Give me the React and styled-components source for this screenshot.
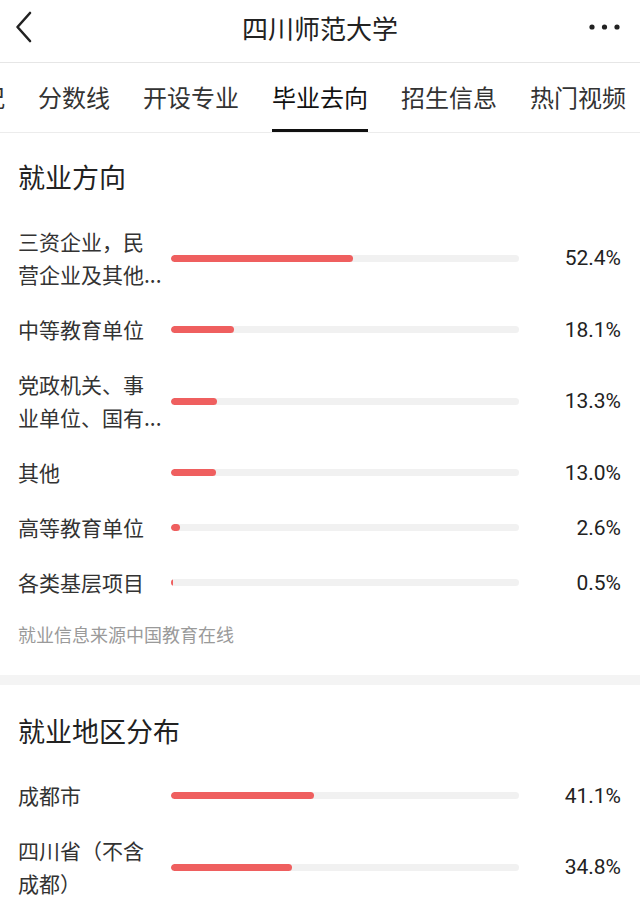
import React from "react"
import styled, { createGlobalStyle } from "styled-components"

const GlobalStyle = createGlobalStyle`
  html, body {
    margin: 0;
    padding: 0;
    background: #fff;
  }
  body {
    font-family: "Noto Sans CJK SC", "Noto Sans", sans-serif;
    color: #333;
    width: 640px;
    overflow: hidden;
  }
`

const Page = styled.div`
  width: 640px;
  background: #fff;
`

const Header = styled.header`
  height: 63px;
  display: flex;
  align-items: center;
  justify-content: space-between;
  padding: 0 20px 8px 12px;
  border-bottom: 1px solid #e6e6e6;
  box-sizing: border-box;
`

const IconButton = styled.div`
  width: ${p => p.$w}px;
  height: 40px;
  display: flex;
  align-items: center;
  justify-content: ${p => (p.$right ? "flex-end" : "flex-start")};
`

const Title = styled.h1`
  margin: 0;
  font-size: 26px;
  font-weight: 400;
  color: #222;
`

const TabBar = styled.nav`
  height: 70px;
  border-bottom: 1px solid #ececec;
  overflow: hidden;
  box-sizing: border-box;
`

const TabStrip = styled.div`
  display: flex;
  gap: 33px;
  height: 100%;
  margin-left: -91px;
  white-space: nowrap;
`

const Tab = styled.div`
  position: relative;
  display: flex;
  align-items: center;
  font-size: 24px;
  color: ${p => (p.$active ? "#111" : "#333")};
  padding-bottom: 3px;

  &::after {
    content: "";
    display: ${p => (p.$active ? "block" : "none")};
    position: absolute;
    left: 0;
    right: 0;
    bottom: 0;
    height: 3px;
    background: #111;
  }
`

const Section = styled.section`
  padding: ${p => p.$top}px 19px ${p => p.$bottom}px 18px;
`

const SectionTitle = styled.h2`
  margin: 0 0 28px;
  font-size: 27px;
  line-height: 40px;
  font-weight: 400;
  color: #222;
`

const List = styled.div`
  display: flex;
  flex-direction: column;
  gap: 22px;
`

const Row = styled.div`
  display: flex;
  align-items: center;
`

const Label = styled.div`
  width: 132px;
  margin-right: 21px;
  font-size: 21px;
  line-height: 33px;
  color: #333;
`

const Line = styled.div`
  white-space: nowrap;
`

const Track = styled.div`
  width: 348px;
  height: 7px;
  border-radius: 4px;
  background: #f1f1f1;
  overflow: hidden;
`

const Fill = styled.div`
  height: 100%;
  border-radius: 4px;
  background: #ef5f5f;
`

const Percent = styled.div`
  flex: 1;
  text-align: right;
  font-family: Roboto, "Liberation Sans", sans-serif;
  font-size: 21px;
  color: #222;
`

const Note = styled.p`
  margin: 23px 0 0;
  font-size: 18px;
  line-height: 24px;
  color: #9a9a9a;
`

const Divider = styled.div`
  height: 10px;
  background: #f4f4f4;
`

const tabs = ["院校概况", "分数线", "开设专业", "毕业去向", "招生信息", "热门视频", "校园风光"]

const jobs = [
  { lines: ["三资企业，民", "营企业及其他..."], value: 52.4 },
  { lines: ["中等教育单位"], value: 18.1 },
  { lines: ["党政机关、事", "业单位、国有..."], value: 13.3 },
  { lines: ["其他"], value: 13.0 },
  { lines: ["高等教育单位"], value: 2.6 },
  { lines: ["各类基层项目"], value: 0.5 },
]

const regions = [
  { lines: ["成都市"], value: 41.1 },
  { lines: ["四川省（不含", "成都）"], value: 34.8 },
]

const BarRow = ({ lines, value }) => (
  <Row>
    <Label>
      {lines.map(l => (
        <Line key={l}>{l}</Line>
      ))}
    </Label>
    <Track>
      <Fill style={{ width: `${Math.max(value, 0.4)}%` }} />
    </Track>
    <Percent>{value.toFixed(1)}%</Percent>
  </Row>
)

const App = () => {
  return (
    <Page>
      <GlobalStyle />
      <Header>
        <IconButton $w={48}>
          <svg width="22" height="32" viewBox="0 0 22 32">
            <path d="M18 2 L5.5 16 L18 30" fill="none" stroke="#222" strokeWidth="2.6" strokeLinecap="round" strokeLinejoin="round" />
          </svg>
        </IconButton>
        <Title>四川师范大学</Title>
        <IconButton $w={40} $right>
          <svg width="31" height="8" viewBox="0 0 31 8">
            <circle cx="3" cy="4" r="2.6" fill="#222" />
            <circle cx="15.5" cy="4" r="2.6" fill="#222" />
            <circle cx="28" cy="4" r="2.6" fill="#222" />
          </svg>
        </IconButton>
      </Header>
      <TabBar>
        <TabStrip>
          {tabs.map(t => (
            <Tab key={t} $active={t === "毕业去向"}>{t}</Tab>
          ))}
        </TabStrip>
      </TabBar>
      <Section $top={24} $bottom={29}>
        <SectionTitle>就业方向</SectionTitle>
        <List>
          {jobs.map(j => (
            <BarRow key={j.lines[0]} {...j} />
          ))}
        </List>
        <Note>就业信息来源中国教育在线</Note>
      </Section>
      <Divider />
      <Section $top={26} $bottom={20}>
        <SectionTitle>就业地区分布</SectionTitle>
        <List>
          {regions.map(r => (
            <BarRow key={r.lines[0]} {...r} />
          ))}
        </List>
      </Section>
    </Page>
  )
}

export default App
